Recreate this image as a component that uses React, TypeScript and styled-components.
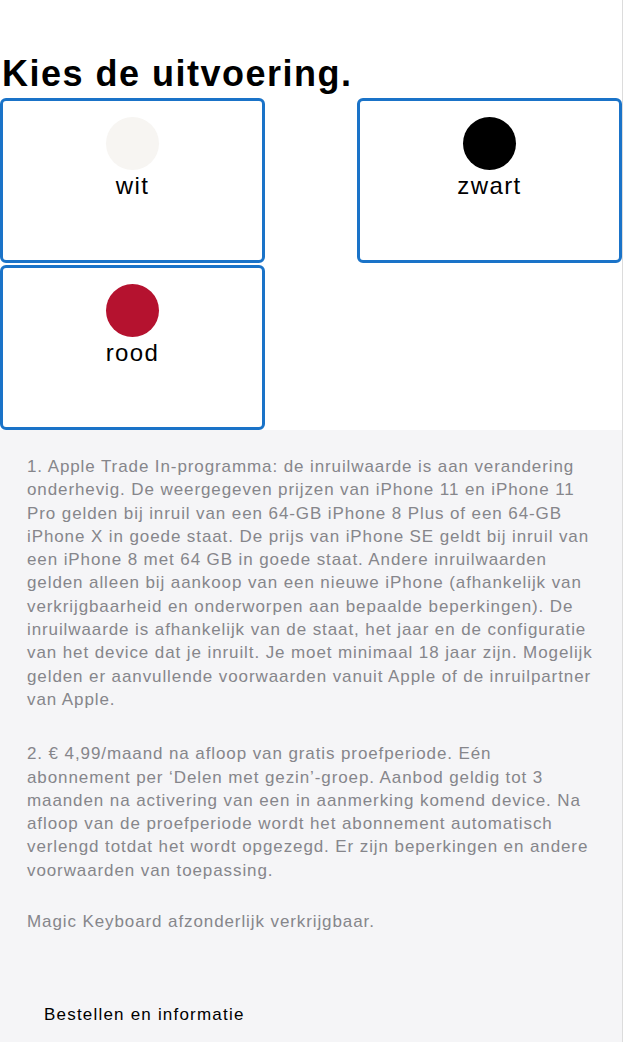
import React from "react";
import styled, { createGlobalStyle } from "styled-components";

const Global = createGlobalStyle`
  html, body { margin: 0; padding: 0; background: #ffffff; }
  body { font-family: "Liberation Sans", Arial, Helvetica, sans-serif; }
`;

const Page = styled.div`
  width: 622px;
  border-right: 1px solid #dcdcdc;
  min-height: 1042px;
  display: flex;
  flex-direction: column;
`;

const Top = styled.section`
  background: #ffffff;
  padding-top: 50px;
`;

const Heading = styled.h2`
  margin: 0 0 0 2px;
  font-size: 36px;
  line-height: 48px;
  font-weight: 700;
  color: #000;
  letter-spacing: 1.5px;
`;

const Options = styled.div`
  display: flex;
  flex-wrap: wrap;
  justify-content: space-between;
  row-gap: 2px;
`;

const Option = styled.button`
  box-sizing: border-box;
  width: 265px;
  height: 165px;
  border: 3px solid #1a73c8;
  border-radius: 6px;
  background: #fff;
  display: flex;
  flex-direction: column;
  align-items: center;
  padding: 16px 0 0;
  cursor: pointer;
  font-family: inherit;
`;

const Swatch = styled.span<{ $color: string }>`
  width: 53px;
  height: 53px;
  border-radius: 50%;
  background: ${(p) => p.$color};
  display: block;
`;

const Label = styled.span`
  font-size: 24px;
  line-height: 32px;
  color: #000;
  letter-spacing: 1.4px;
`;

const Footnotes = styled.section`
  flex: 1;
  background: #f5f5f7;
  padding: 25px 27px 0 27px;
`;

const Note = styled.p<{ $last?: boolean }>`
  margin: 0 0 ${(p) => (p.$last ? "28px" : "31px")};
  font-size: 17px;
  line-height: 23.3px;
  color: #86868b;
  letter-spacing: 0.9px;
`;

const Order = styled.div`
  margin-top: 70px;
  padding-left: 17px;
  font-size: 17px;
  line-height: 23px;
  color: #000;
  letter-spacing: 1.2px;
`;

const colors = [
  { name: "wit", color: "#f7f5f2" },
  { name: "zwart", color: "#000000" },
  { name: "rood", color: "#b5122f" },
];

export default function App() {
  return (
    <>
      <Global />
      <Page>
        <Top>
          <Heading>Kies de uitvoering.</Heading>
          <Options>
            {colors.map((c) => (
              <Option key={c.name}>
                <Swatch $color={c.color} />
                <Label>{c.name}</Label>
              </Option>
            ))}
          </Options>
        </Top>
        <Footnotes>
          <Note>
            1. Apple Trade In-programma: de inruilwaarde is aan verandering onderhevig. De
            weergegeven prijzen van iPhone 11 en iPhone 11 Pro gelden bij inruil van een 64-GB
            iPhone 8 Plus of een 64-GB iPhone X in goede staat. De prijs van iPhone SE geldt bij
            inruil van een iPhone 8 met 64 GB in goede staat. Andere inruilwaarden gelden alleen
            bij aankoop van een nieuwe iPhone (afhankelijk van verkrijgbaarheid en onderworpen aan
            bepaalde beperkingen). De inruilwaarde is afhankelijk van de staat, het jaar en de
            configuratie van het device dat je inruilt. Je moet minimaal 18 jaar zijn. Mogelijk
            gelden er aanvullende voorwaarden vanuit Apple of de inruilpartner van Apple.
          </Note>
          <Note $last>
            2. € 4,99/maand na afloop van gratis proefperiode. Eén abonnement per ‘Delen met
            gezin’-groep. Aanbod geldig tot 3 maanden na activering van een in aanmerking komend
            device. Na afloop van de proefperiode wordt het abonnement automatisch verlengd totdat
            het wordt opgezegd. Er zijn beperkingen en andere voorwaarden van toepassing.
          </Note>
          <Note>Magic Keyboard afzonderlijk verkrijgbaar.</Note>
          <Order>Bestellen en informatie</Order>
        </Footnotes>
      </Page>
    </>
  );
}
